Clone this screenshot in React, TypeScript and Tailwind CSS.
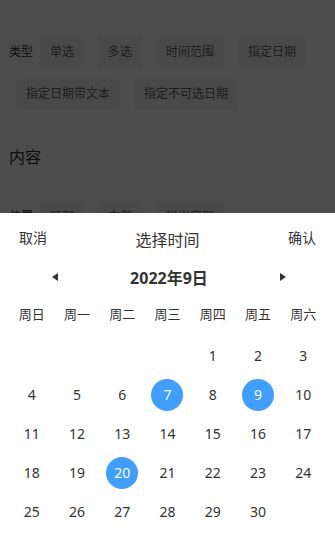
import React from "react";

const font = { fontFamily: '"Noto Sans", "Noto Sans CJK SC", sans-serif' };

const weekdays = ["周日", "周一", "周二", "周三", "周四", "周五", "周六"];
const selected = [7, 9, 20];

function OptionRow({ label, options }: { label?: string; options: string[] }) {
  return (
    <div className="flex flex-wrap items-start">
      {label && <span className="text-[12px] leading-[32px] text-[#333]">{label}</span>}
      {options.map((o) => (
        <span
          key={o}
          className="mx-[7px] mb-[10px] flex h-[32px] items-center rounded-[4px] bg-[#f4f4f4] px-[10px] text-[12px] text-[#666]"
        >
          {o}
        </span>
      ))}
    </div>
  );
}

function Arrow({ dir }: { dir: "left" | "right" }) {
  return dir === "left" ? (
    <span className="block h-0 w-0 border-y-[4px] border-r-[6px] border-y-transparent border-r-[#333]" />
  ) : (
    <span className="block h-0 w-0 border-y-[4px] border-l-[6px] border-y-transparent border-l-[#333]" />
  );
}

export default function App() {
  const cells: (number | null)[] = [null, null, null, null];
  for (let d = 1; d <= 30; d++) cells.push(d);

  return (
    <div className="relative h-[540px] w-full overflow-hidden bg-white" style={font}>
      <div className="px-[9px] pt-[36px]">
        <OptionRow
          label="类型"
          options={["单选", "多选", "时间范围", "指定日期", "指定日期带文本", "指定不可选日期"]}
        />
        <div className="mt-[25px] text-[16px] leading-[24px] text-[#333]">内容</div>
        <div className="mt-[32px]">
          <OptionRow label="位置" options={["顶部", "中部", "弹出底部"]} />
        </div>
      </div>

      <div className="absolute inset-0 bg-black/70" />

      <div className="absolute bottom-0 left-0 right-0 h-[327px] bg-white text-[#333]">
        <div className="flex h-[48px] items-center justify-between px-[19px]">
          <span className="text-[14px]">取消</span>
          <span className="mt-[6px] text-[16px]">选择时间</span>
          <span className="text-[14px]">确认</span>
        </div>
        <div className="mt-[2px] flex h-[28px] items-center justify-between pl-[52px] pr-[49px]">
          <Arrow dir="left" />
          <span className="mt-[1px] text-[16px] font-bold">2022年9日</span>
          <Arrow dir="right" />
        </div>
        <div className="mt-[4px] grid h-[40px] grid-cols-7 items-center px-[9px]">
          {weekdays.map((w) => (
            <span key={w} className="text-center text-[13px]">
              {w}
            </span>
          ))}
        </div>
        <div className="mt-[1px] grid grid-cols-7 px-[9px]">
          {cells.map((d, i) => (
            <div key={i} className="flex h-[39px] items-center justify-center">
              {d !== null &&
                (selected.includes(d) ? (
                  <span className="flex h-[32px] w-[32px] items-center justify-center rounded-full bg-[#409eff] text-[14px] text-white">
                    {d}
                  </span>
                ) : (
                  <span className="text-[14px]">{d}</span>
                ))}
            </div>
          ))}
        </div>
      </div>
    </div>
  );
}
